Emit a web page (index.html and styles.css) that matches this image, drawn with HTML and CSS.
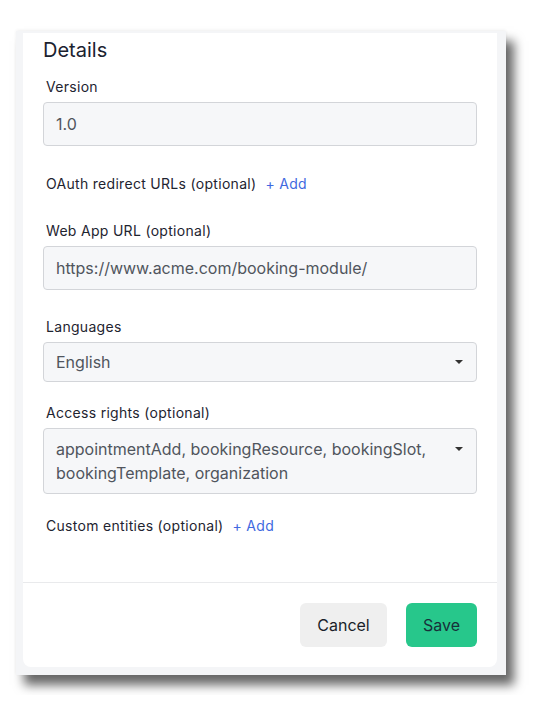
FILE: index.html
```html
<!DOCTYPE html>
<html lang="en">
<head>
<meta charset="utf-8">
<title>Details</title>
<link rel="stylesheet" href="styles.css">
</head>
<body>
<div class="frame">
  <div class="card">
    <div class="card-body">
      <h2 class="title">Details</h2>

      <div class="field f-version">
        <label class="label">Version</label>
        <div class="input">1.0</div>
      </div>

      <div class="field f-oauth">
        <div class="label-row">
          <span class="label">OAuth redirect URLs (optional)</span>
          <a class="add">+ Add</a>
        </div>
      </div>

      <div class="field f-web">
        <label class="label">Web App URL (optional)</label>
        <div class="input">https://www.acme.com/booking-module/</div>
      </div>

      <div class="field f-lang">
        <label class="label">Languages</label>
        <div class="select">
          <span class="select-text">English</span>
          <span class="caret"></span>
        </div>
      </div>

      <div class="field f-access">
        <label class="label">Access rights (optional)</label>
        <div class="select multi">
          <span class="select-text">appointmentAdd, bookingResource, bookingSlot, bookingTemplate, organization</span>
          <span class="caret"></span>
        </div>
      </div>

      <div class="field f-custom">
        <div class="label-row">
          <span class="label">Custom entities (optional)</span>
          <a class="add">+ Add</a>
        </div>
      </div>
    </div>

    <div class="card-footer">
      <button class="btn btn-cancel">Cancel</button>
      <button class="btn btn-save">Save</button>
    </div>
  </div>
</div>
</body>
</html>
```

FILE: styles.css
```css
* { box-sizing: border-box; }

html, body {
  margin: 0;
  padding: 0;
  background: #ffffff;
}

body {
  font-family: Inter, "Noto Sans", "Liberation Sans", sans-serif;
  color: #1e2430;
  padding-bottom: 20px;
}

.frame {
  margin: 31px 0 0 16px;
  width: 490px;
  height: 644px;
  background: #f4f5f7;
  padding: 2px 9px 8px 7px;
  box-shadow: 8px 10px 10px rgba(0, 0, 0, 0.6), 0 -1px 3px rgba(0, 0, 0, 0.06);
}

.card {
  background: #ffffff;
  width: 474px;
  height: 634px;
  border-radius: 0 0 8px 8px;
  display: flex;
  flex-direction: column;
}

.card-body {
  padding: 5px 20px 0 20px;
  height: 550px;
  border-bottom: 1px solid #e9eaec;
}

.title {
  margin: 0;
  font-size: 20px;
  line-height: 24px;
  font-weight: 400;
  color: #1b2230;
}

.field { display: flex; flex-direction: column; }

.f-version { margin-top: 15px; }
.f-oauth { margin-top: 28px; }
.f-web { margin-top: 27px; }
.f-lang { margin-top: 27px; }
.f-access { margin-top: 21px; }
.f-custom { margin-top: 22px; }

.label {
  font-size: 14px;
  line-height: 20px;
  letter-spacing: 0.3px;
  color: #1e2430;
  padding-left: 3px;
}

.field > .label { margin-bottom: 5px; }

.label-row {
  display: flex;
  align-items: center;
  gap: 9px;
}

.add {
  font-size: 14px;
  line-height: 20px;
  letter-spacing: 0.3px;
  color: #3f6ae0;
  cursor: pointer;
}

.input, .select {
  background: #f6f7f9;
  border: 1px solid #d3d5d9;
  border-radius: 4px;
  color: #50555d;
  font-size: 16px;
  line-height: 24px;
  padding: 9px 12px;
}

.input { height: 44px; }

.select {
  height: 40px;
  padding: 7px 12px;
  display: flex;
  align-items: flex-start;
  justify-content: space-between;
}

.select.multi {
  height: 66px;
  padding: 8px 12px;
}

.select-text { flex: 1; padding-right: 20px; }

.caret {
  width: 0;
  height: 0;
  border-left: 4px solid transparent;
  border-right: 4px solid transparent;
  border-top: 4px solid #333;
  margin-top: 10px;
  margin-right: 1px;
}

.card-footer {
  display: flex;
  justify-content: flex-end;
  gap: 19px;
  padding: 20px 20px 0 20px;
}

.btn {
  font-family: inherit;
  font-size: 16px;
  height: 44px;
  border: none;
  border-radius: 6px;
  padding: 0;
  color: #1a1f2a;
}

.btn-cancel {
  width: 87px;
  background: #efefef;
}

.btn-save {
  width: 71px;
  background: #27c78b;
  color: #17303a;
}
```
